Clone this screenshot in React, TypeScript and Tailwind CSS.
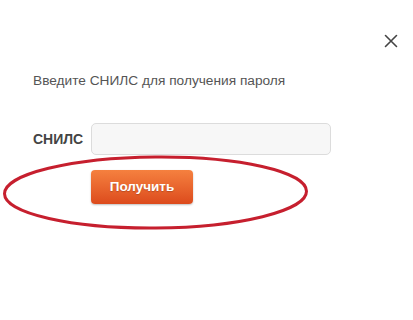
export default function App() {
  return (
    <div className="relative w-[413px] h-[320px] bg-white overflow-hidden" style={{ fontFamily: '"Liberation Sans", Arial, sans-serif' }}>
      <div className="flex justify-end pt-[34px] pr-[15px]">
        <button className="w-[14px] h-[14px] text-[#444]" aria-label="Закрыть">
          <svg viewBox="0 0 14 14" width="14" height="14" stroke="currentColor" strokeWidth="1.6" strokeLinecap="round">
            <path d="M1.5 1.5 L12.5 12.5 M12.5 1.5 L1.5 12.5" />
          </svg>
        </button>
      </div>

      <p className="pl-[33px] mt-[24px] text-[13.7px] leading-[17px] text-[#555]">
        Введите СНИЛС для получения пароля
      </p>

      <div className="flex items-center pl-[33px] mt-[34px]">
        <label className="w-[58px] text-[14px] font-bold text-[#444]">СНИЛС</label>
        <input
          type="text"
          className="w-[240px] h-[32px] rounded-[5px] border border-[#dcdcdc] bg-[#f7f7f7] px-2 text-[13px] outline-none"
        />
      </div>

      <div className="pl-[91px] mt-[15px]">
        <button className="w-[102px] h-[34px] rounded-[4px] bg-gradient-to-b from-[#f5803f] to-[#dc4a1c] text-white text-[13.5px] font-bold shadow-[0_1px_2px_rgba(0,0,0,0.25)] [text-shadow:0_1px_1px_rgba(0,0,0,0.2)]">
          Получить
        </button>
      </div>

      {/* red annotation ellipse */}
      <svg className="absolute left-0 top-0 pointer-events-none" width="413" height="320">
        <ellipse cx="155.5" cy="192.5" rx="151" ry="35.5" fill="none" stroke="#c61f2e" strokeWidth="3" transform="rotate(-0.5 155.5 192.5)" />
      </svg>
    </div>
  );
}
